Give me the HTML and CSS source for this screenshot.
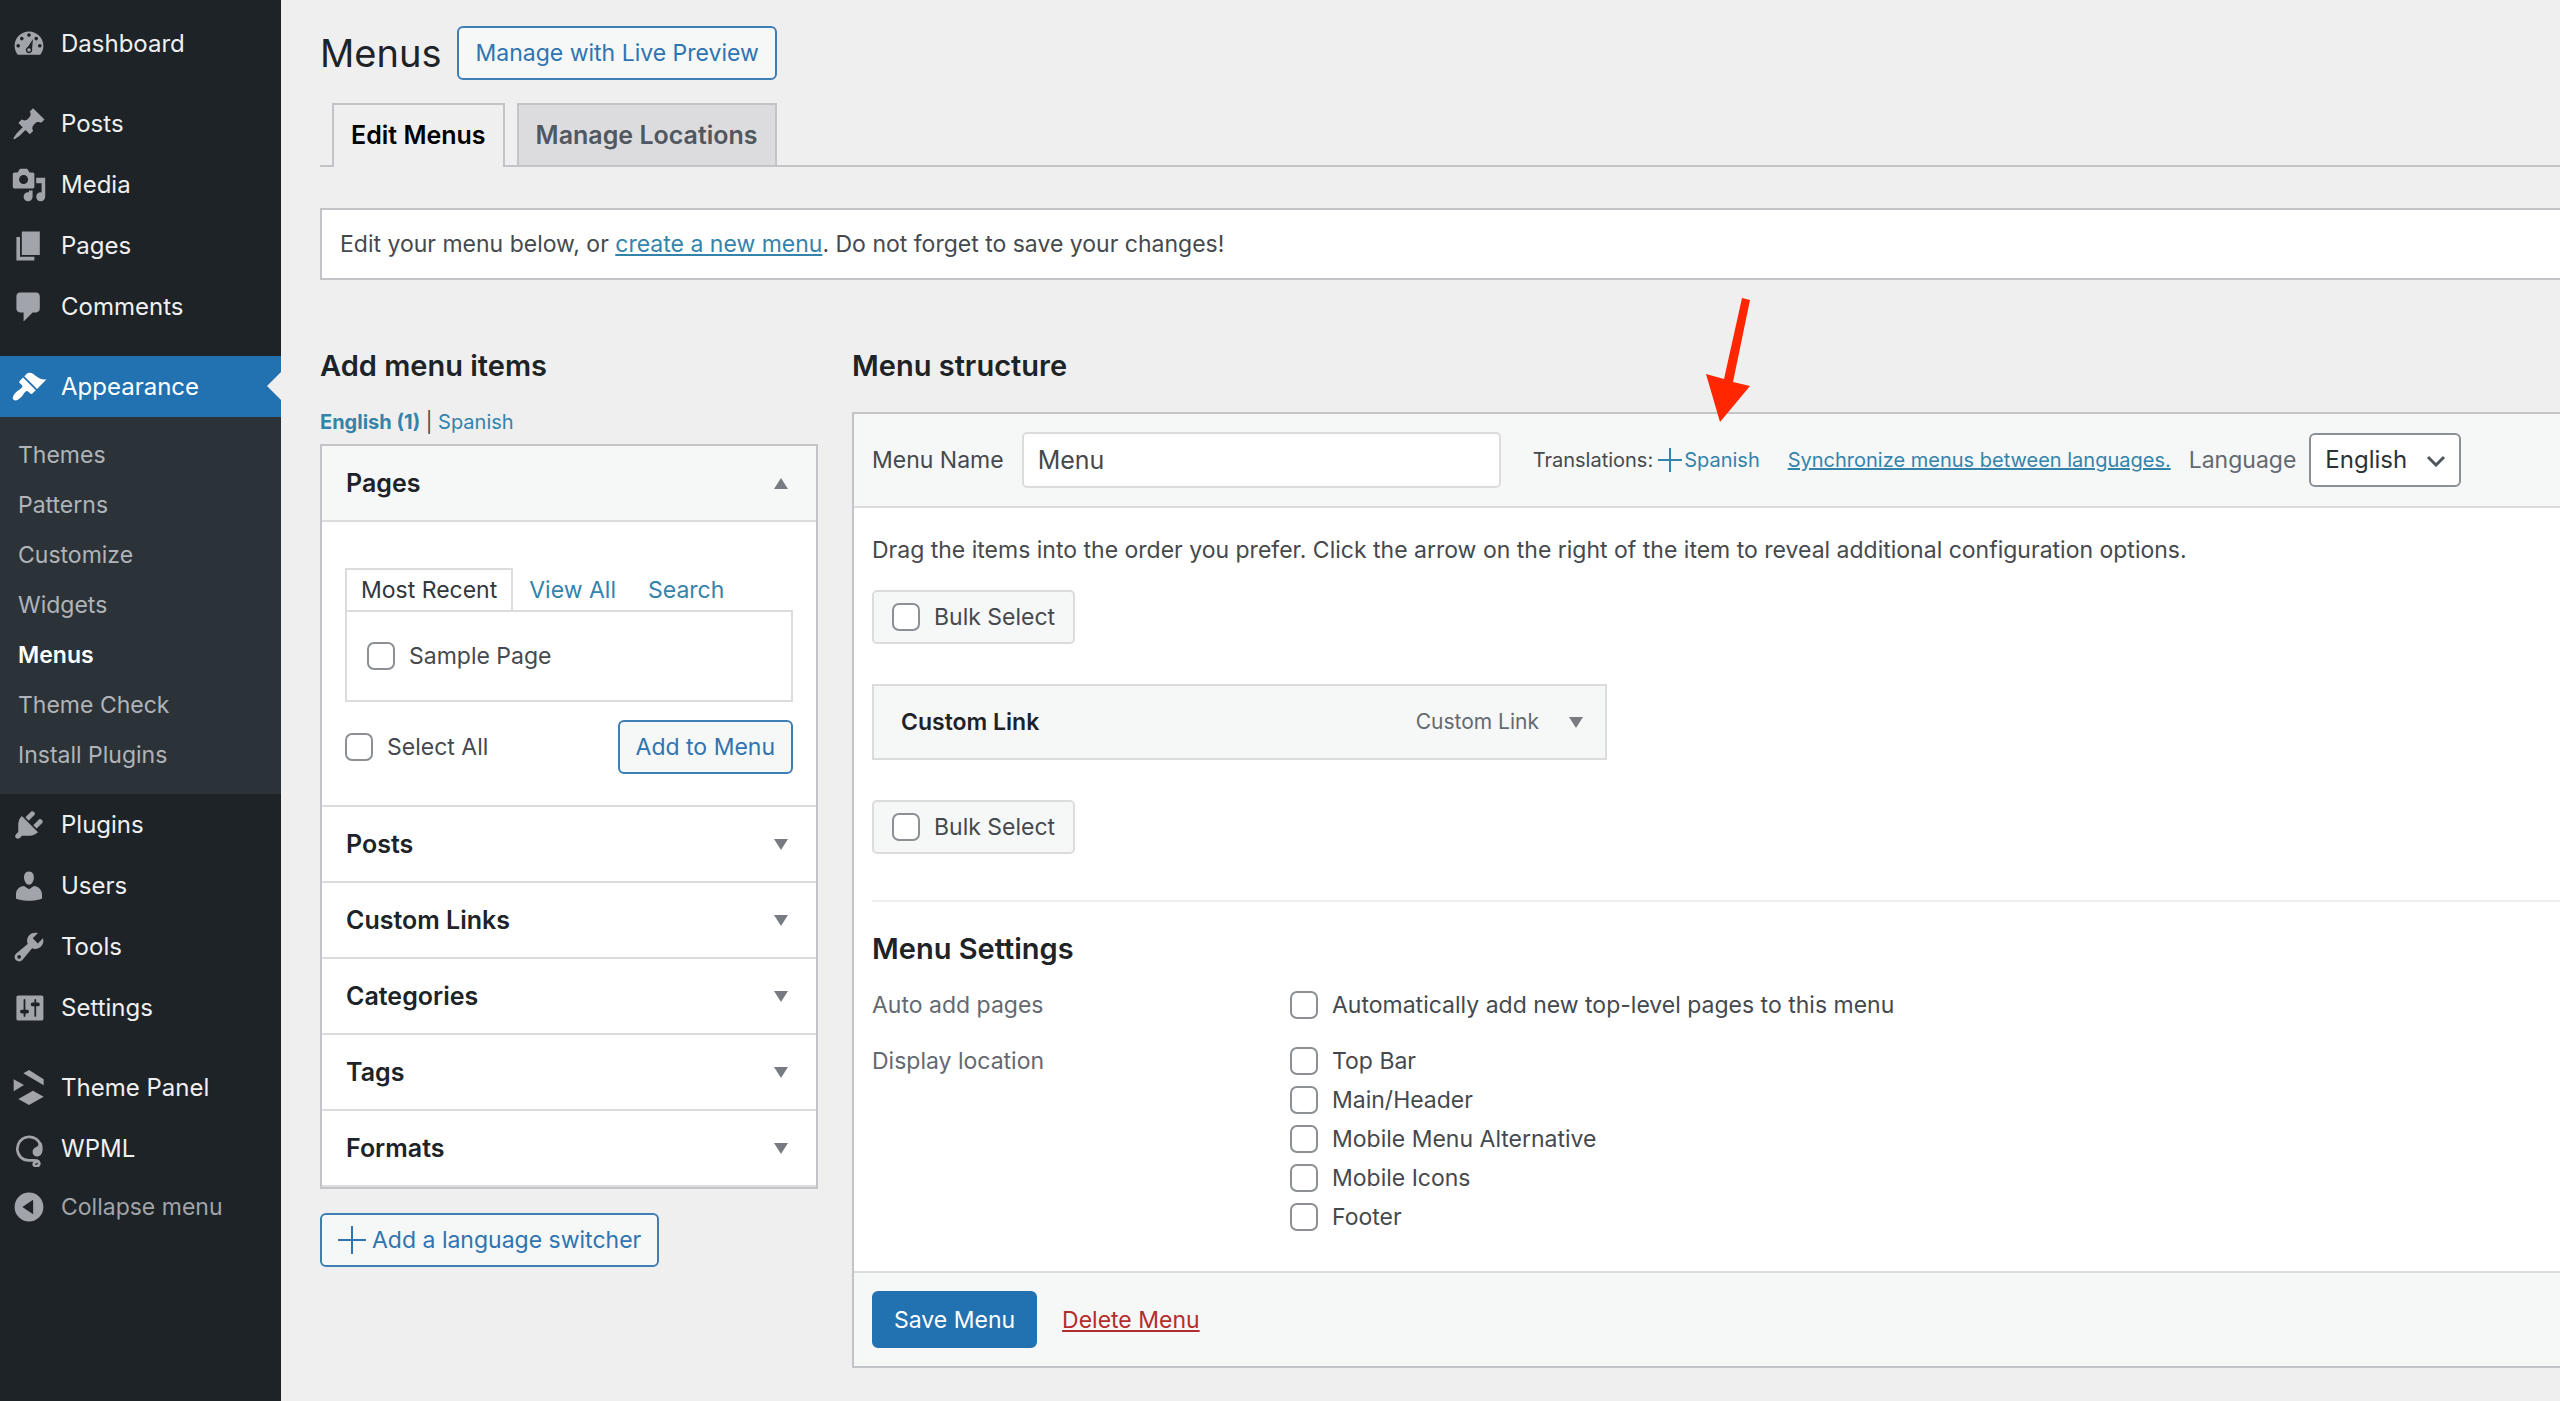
FILE: index.html
```html
<!DOCTYPE html>
<html lang="en">
<head>
<meta charset="utf-8">
<meta name="viewport" content="width=device-width, initial-scale=1">
<title>Menus</title>
<link rel="stylesheet" href="styles.css">
</head>
<body>
<div class="layout">
  <nav class="sidebar" aria-label="Main menu">
    <ul class="menu">
      <li><a class="menu-link" href="#"><svg class="icon" viewBox="0 0 20 20"><path fill-rule="evenodd" d="M3.76 16h12.48c1.1-1.37 1.76-3.11 1.76-5 0-4.42-3.58-8-8-8s-8 3.58-8 8c0 1.89.66 3.63 1.76 5zM10 4c.55 0 1 .45 1 1s-.45 1-1 1-1-.45-1-1 .45-1 1-1zM6 6c.55 0 1 .45 1 1s-.45 1-1 1-1-.45-1-1 .45-1 1-1zM14 6c.55 0 1 .45 1 1s-.45 1-1 1-1-.45-1-1 .45-1 1-1zM4 10c.55 0 1 .45 1 1s-.45 1-1 1-1-.45-1-1 .45-1 1-1zM16 10c.55 0 1 .45 1 1s-.45 1-1 1-1-.45-1-1 .45-1 1-1zM12.2 7.4 11.7 12.6c.1.3.1.5.1.7 0 1-.8 1.8-1.8 1.8s-1.8-.8-1.8-1.8c0-.8.5-1.4 1.1-1.7zM10 12.3a1 1 0 1 0 0 2 1 1 0 0 0 0-2z"/></svg>Dashboard</a></li>
      <li class="separator"></li>
      <li><a class="menu-link" href="#"><svg class="icon" viewBox="0 0 20 20"><path d="M10.44 3.02l1.82-1.82 6.36 6.35-1.83 1.82c-1.05-.68-2.48-.57-3.41.36l-.75.75c-.92.93-1.04 2.35-.35 3.41l-1.83 1.82-2.41-2.41-2.8 2.79c-.42.42-3.38 2.71-3.8 2.29s1.86-3.39 2.28-3.81l2.79-2.79L4.1 9.38l1.83-1.83c1.05.69 2.48.57 3.4-.36l.75-.75c.93-.92 1.05-2.35.36-3.42z"/></svg>Posts</a></li>
      <li><a class="menu-link" href="#"><svg class="icon" viewBox="0 0 20 20"><path fill-rule="evenodd" d="M13 11V4c0-.55-.45-1-1-1h-1.67L9 1H5L3.67 3H2c-.55 0-1 .45-1 1v7c0 .55.45 1 1 1h10c.55 0 1-.45 1-1zM7 4.5c1.38 0 2.5 1.12 2.5 2.5S8.38 9.5 7 9.5 4.5 8.38 4.5 7 5.62 4.5 7 4.5zM14 6h5v10.5c0 1.38-1.12 2.5-2.5 2.5S14 17.88 14 16.5s1.12-2.5 2.5-2.5c.17 0 .34.02.5.05V9h-3V6zM10 14.05V13h2v3.5c0 1.38-1.12 2.5-2.5 2.5S7 17.88 7 16.5 8.12 14 9.5 14c.17 0 .34.02.5.05z"/></svg>Media</a></li>
      <li><a class="menu-link" href="#"><svg class="icon" viewBox="0 0 20 20"><path d="M6 15V2h10v13H6zm-1 1h8v2H3V5h2v11z"/></svg>Pages</a></li>
      <li><a class="menu-link" href="#"><svg class="icon" viewBox="0 0 20 20"><path d="M5 2h9c1.1 0 2 .9 2 2v7c0 1.1-.9 2-2 2h-2l-5 5v-5H5c-1.1 0-2-.9-2-2V4c0-1.1.9-2 2-2z"/></svg>Comments</a></li>
      <li class="separator"></li>
      <li>
        <a class="menu-link current" href="#"><svg class="icon" viewBox="0 0 20 20"><path d="M14.48 11.06L7.41 3.99l1.5-1.5c.5-.56 2.3-.47 3.51.32 1.21.8 1.43 1.28 2.91 2.1 1.18.64 2.45 1.26 4.45.85zm-.71.71L6.7 4.7 4.93 6.47c-.39.39-.39 1.02 0 1.41l1.06 1.06c.39.39.39 1.03 0 1.42-.6.6-1.43 1.11-2.21 1.69-.35.26-.7.53-1.01.84C1.43 14.23.4 16.08 1.4 17.07c.99 1 2.84-.03 4.18-1.36.31-.31.58-.66.85-1.02.57-.78 1.08-1.61 1.69-2.21.39-.39 1.02-.39 1.41 0l1.06 1.06c.39.39 1.02.39 1.41 0z"/></svg>Appearance</a>
        <ul class="submenu">
          <li><a href="#">Themes</a></li>
          <li><a href="#">Patterns</a></li>
          <li><a href="#">Customize</a></li>
          <li><a href="#">Widgets</a></li>
          <li><a class="active" href="#">Menus</a></li>
          <li><a href="#">Theme Check</a></li>
          <li><a href="#">Install Plugins</a></li>
        </ul>
      </li>
      <li><a class="menu-link" href="#"><svg class="icon" viewBox="0 0 20 20"><path d="M13.11 4.36L9.87 7.6 8 5.73l3.24-3.24c.35-.34 1.05-.2 1.56.32.52.51.66 1.21.31 1.55zm-8 1.77l.91-1.12 9.01 9.01-1.19.84c-.71.71-2.63 1.16-3.82 1.16H6.14L4.9 17.26c-.59.59-1.54.59-2.12 0-.59-.58-.59-1.53 0-2.12l1.24-1.24v-3.88c0-1.13.4-3.19 1.09-3.89zm7.26 3.97l3.24-3.24c.34-.35 1.04-.21 1.55.31.52.51.66 1.21.31 1.55l-3.24 3.25z"/></svg>Plugins</a></li>
      <li><a class="menu-link" href="#"><svg class="icon" viewBox="0 0 20 20"><path d="M10 9.25c-2.27 0-2.73-3.44-2.73-3.44C7 4.02 7.82 2 9.97 2c2.16 0 2.98 2.02 2.71 3.81 0 0-.41 3.44-2.68 3.44zm0 2.57L12.72 10c2.39 0 4.52 2.33 4.52 4.53v2.49s-3.65 1.13-7.24 1.13c-3.65 0-7.24-1.13-7.24-1.13v-2.49c0-2.25 1.94-4.48 4.47-4.48z"/></svg>Users</a></li>
      <li><a class="menu-link" href="#"><svg class="icon" viewBox="0 0 20 20"><path fill-rule="evenodd" d="M16.68 9.77c-1.34 1.34-3.3 1.67-4.95.99l-5.41 6.52c-.99.99-2.59.99-3.58 0s-.99-2.59 0-3.57l6.52-5.42c-.68-1.65-.35-3.61.99-4.95 1.28-1.28 3.12-1.62 4.72-1.06l-2.89 2.89 2.82 2.82 2.86-2.87c.53 1.58.18 3.39-1.08 4.65zM3.81 16.21c.4.39 1.04.39 1.43 0 .4-.4.4-1.04 0-1.43-.39-.4-1.03-.4-1.43 0-.39.39-.39 1.03 0 1.43z"/></svg>Tools</a></li>
      <li><a class="menu-link" href="#"><svg class="icon" viewBox="0 0 20 20"><path fill-rule="evenodd" d="M18 16V4c0-.55-.45-1-1-1H4c-.55 0-1 .45-1 1v12c0 .55.45 1 1 1h13c.55 0 1-.45 1-1zM8 11h1c.55 0 1 .45 1 1s-.45 1-1 1H8v1.5c0 .28-.22.5-.5.5s-.5-.22-.5-.5V13H6c-.55 0-1-.45-1-1s.45-1 1-1h1V5.500c0-.28.22-.5.5-.5s.5.22.5.5zM14 9v5.500c0 .28-.22.5-.5.5s-.5-.22-.5-.5V9h-1c-.55 0-1-.45-1-1s.45-1 1-1h1V5.500c0-.28.22-.5.5-.5s.5.22.5.5V7h1c.55 0 1 .45 1 1s-.45 1-1 1z"/></svg>Settings</a></li>
      <li class="separator"></li>
      <li><a class="menu-link" href="#"><svg class="icon" viewBox="0 0 108 108"><path d="M37 10 54 0l44 28v18zM8 28l31 17L8 64zM22 87l44-25 32 18-44 25z"/></svg>Theme Panel</a></li>
      <li><a class="menu-link" href="#"><svg class="icon" viewBox="0 0 108 108"><path d="M92 36c6 18 3 35-9 40-9 2-19-4-18-14 0-7 4-10 9-13 7-4 10-6 8-13z"/><path class="stroke" d="M90 45C84 24 66 16 50 18 30 21 18 37 19 56c2 20 16 32 34 32 14 1 30-3 32 8 1 12-18 12-17 3 1-5 7-5 8-2"/></svg>WPML</a></li>
      <li><button class="menu-link collapse" type="button"><svg class="icon" viewBox="0 0 20 20"><path fill-rule="evenodd" d="M10 2a8 8 0 1 0 0 16 8 8 0 0 0 0-16zM12.300 6v8L6.300 10z"/></svg>Collapse menu</button></li>
    </ul>
  </nav>

  <main class="content">
    <header class="page-head">
      <h1>Menus</h1>
      <a class="button" href="#">Manage with Live Preview</a>
    </header>
    <nav class="tabs" aria-label="Sections">
      <a class="tab selected" href="#">Edit Menus</a>
      <a class="tab" href="#">Manage Locations</a>
    </nav>
    <p class="notice">Edit your menu below, or <a href="#">create a new menu</a>. Do not forget to save your changes!</p>

    <div class="columns">
      <section class="items-column">
        <h2>Add menu items</h2>
        <p class="languages"><a class="strong" href="#">English (1)</a> | <a href="#">Spanish</a></p>
        <div class="accordion">
          <h3><button class="accordion-head open" type="button">Pages<svg class="arrow" viewBox="0 0 14 11"><path d="M7 0l7 11H0z"/></svg></button></h3>
          <div class="accordion-body">
            <div class="subtabs">
              <a class="subtab selected" href="#">Most Recent</a>
              <a class="subtab" href="#">View All</a>
              <a class="subtab" href="#">Search</a>
            </div>
            <div class="page-list">
              <label class="check"><input type="checkbox">Sample Page</label>
            </div>
            <div class="page-actions">
              <label class="check"><input type="checkbox">Select All</label>
              <button class="button" type="button">Add to Menu</button>
            </div>
          </div>
          <h3><button class="accordion-head" type="button">Posts<svg class="arrow" viewBox="0 0 14 11"><path d="M0 0h14L7 11z"/></svg></button></h3>
          <h3><button class="accordion-head" type="button">Custom Links<svg class="arrow" viewBox="0 0 14 11"><path d="M0 0h14L7 11z"/></svg></button></h3>
          <h3><button class="accordion-head" type="button">Categories<svg class="arrow" viewBox="0 0 14 11"><path d="M0 0h14L7 11z"/></svg></button></h3>
          <h3><button class="accordion-head" type="button">Tags<svg class="arrow" viewBox="0 0 14 11"><path d="M0 0h14L7 11z"/></svg></button></h3>
          <h3><button class="accordion-head" type="button">Formats<svg class="arrow" viewBox="0 0 14 11"><path d="M0 0h14L7 11z"/></svg></button></h3>
        </div>
        <button class="button switcher" type="button"><svg class="plus" viewBox="0 0 28 28"><path d="M14 0v28M0 14h28"/></svg>Add a language switcher</button>
      </section>

      <section class="structure-column">
        <h2>Menu structure</h2>
        <div class="editor">
          <div class="editor-head">
            <label class="name-label" for="menu-name">Menu Name</label>
            <input class="name-input" id="menu-name" type="text" value="Menu">
            <span class="translations">Translations: <a href="#"><svg class="plus small" viewBox="0 0 24 24"><path d="M12 0v24M0 12h24"/></svg>Spanish</a></span>
            <a class="sync" href="#">Synchronize menus between languages.</a>
            <label class="language-label" for="language">Language</label>
            <span class="select-wrap">
              <select id="language"><option>English</option></select>
              <svg class="chevron" viewBox="0 0 20 12"><path d="M2 2l8 8 8-8"/></svg>
            </span>
            <svg class="pointer" viewBox="0 0 44 124" aria-hidden="true"><path d="M36 0l8 2-17 82 17 4L14 124 0 76l18 5z"/></svg>
          </div>
          <div class="editor-body">
            <p>Drag the items into the order you prefer. Click the arrow on the right of the item to reveal additional configuration options.</p>
            <label class="check bulk"><input type="checkbox">Bulk Select</label>
            <div class="menu-item">
              <strong>Custom Link</strong>
              <span class="item-type">Custom Link</span>
              <button class="item-toggle" type="button" aria-label="Edit Custom Link"><svg class="arrow" viewBox="0 0 14 11"><path d="M0 0h14L7 11z"/></svg></button>
            </div>
            <label class="check bulk"><input type="checkbox">Bulk Select</label>
            <div class="settings">
              <h2>Menu Settings</h2>
              <fieldset>
                <legend>Auto add pages</legend>
                <div class="options">
                  <label class="check"><input type="checkbox">Automatically add new top-level pages to this menu</label>
                </div>
              </fieldset>
              <fieldset>
                <legend>Display location</legend>
                <div class="options">
                  <label class="check"><input type="checkbox">Top Bar</label>
                  <label class="check"><input type="checkbox">Main/Header</label>
                  <label class="check"><input type="checkbox">Mobile Menu Alternative</label>
                  <label class="check"><input type="checkbox">Mobile Icons</label>
                  <label class="check"><input type="checkbox">Footer</label>
                </div>
              </fieldset>
            </div>
          </div>
          <footer class="editor-foot">
            <button class="button primary" type="button">Save Menu</button>
            <a class="delete" href="#">Delete Menu</a>
          </footer>
        </div>
      </section>
    </div>
  </main>
</div>
</body>
</html>
```
FILE: styles.css
```css
* {
  box-sizing: border-box;
}

body {
  margin: 0;
  background: #efefef;
  color: #45494d;
  font-family: Inter, "Liberation Sans", sans-serif;
  font-size: 23px;
  line-height: 32px;
  overflow-x: hidden;
}

h1, h2, h3, p, ul, fieldset {
  margin: 0;
  padding: 0;
}

ul {
  list-style: none;
}

a {
  color: #3483ab;
}

button, input, select {
  font: inherit;
  color: inherit;
}

.layout {
  display: flex;
  min-height: 100vh;
}

/* Sidebar */

.sidebar {
  flex: none;
  width: 281px;
  padding-top: 13px;
  background: #1d2327;
}

.separator {
  height: 19px;
}

.menu-link {
  display: flex;
  align-items: center;
  gap: 14px;
  width: 100%;
  height: 61px;
  padding: 0 0 0 11px;
  border: 0;
  background: none;
  color: #f0f0f1;
  font-size: 24px;
  text-decoration: none;
}

.menu-link.current {
  position: relative;
  background: #2271b1;
  color: #fff;
}

.menu-link.current::after {
  content: "";
  position: absolute;
  right: 0;
  top: 16px;
  border: 14px solid transparent;
  border-left: 0;
  border-right-color: #efefef;
}

.menu-link.collapse {
  height: 56px;
  color: #a1a5aa;
  font-size: 23px;
}

.icon {
  flex: none;
  width: 36px;
  height: 36px;
  fill: #a1a5ab;
}

.icon .stroke {
  fill: none;
  stroke: #a1a5ab;
  stroke-width: 8;
}

.current .icon {
  fill: #fff;
}

.submenu {
  padding: 13px 0 14px;
  background: #2c3338;
}

.submenu a {
  display: block;
  height: 50px;
  padding-left: 18px;
  color: #b0b4b9;
  line-height: 50px;
  text-decoration: none;
}

.submenu .active {
  color: #fff;
  font-weight: 600;
}

/* Page heading */

.content {
  flex: 1;
  min-width: 0;
  padding: 26px 0 32px 39px;
}

.page-head {
  display: flex;
  align-items: center;
  gap: 16px;
}

h1 {
  color: #1d2327;
  font-size: 38px;
  font-weight: 400;
  line-height: 54px;
}

.button {
  display: inline-flex;
  align-items: center;
  justify-content: center;
  height: 54px;
  padding: 0 16px;
  border: 2px solid #3d7fb5;
  border-radius: 6px;
  background: #f6f7f7;
  color: #2f74b0;
  text-decoration: none;
  white-space: nowrap;
}

.tabs {
  display: flex;
  gap: 12px;
  margin-top: 23px;
  padding-left: 12px;
  border-bottom: 2px solid #c3c4c7;
}

.tab {
  height: 62px;
  padding: 0 17px;
  border: 2px solid #c3c4c7;
  border-bottom: 0;
  background: #dcdcde;
  color: #50575e;
  font-size: 25px;
  font-weight: 600;
  line-height: 60px;
  text-decoration: none;
}

.tab.selected {
  height: 64px;
  margin-bottom: -2px;
  background: #efefef;
  color: #000;
}

.notice {
  margin-top: 41px;
  padding: 18px;
  border: 2px solid #c3c4c7;
  border-right: 0;
  background: #fff;
}

/* Columns */

.columns {
  display: flex;
  gap: 34px;
  margin-top: 66px;
}

.items-column {
  flex: none;
  width: 498px;
}

.structure-column {
  flex: 1;
  min-width: 0;
}

h2 {
  color: #1d2327;
  font-size: 29px;
  font-weight: 600;
  line-height: 40px;
}

.languages {
  margin: 22px 0 8px;
  font-size: 20px;
  line-height: 28px;
}

.languages a {
  text-decoration: none;
}

.languages .strong {
  font-weight: 700;
}

.accordion {
  border: 2px solid #c3c4c7;
  background: #fff;
}

.accordion-head {
  display: flex;
  align-items: center;
  justify-content: space-between;
  width: 100%;
  height: 76px;
  padding: 0 28px 0 24px;
  border: 0;
  border-bottom: 2px solid #dcdcde;
  background: #fff;
  color: #1d2327;
  font-size: 25px;
  font-weight: 600;
}

.accordion-head.open {
  background: #f6f7f7;
}

.arrow {
  flex: none;
  width: 14px;
  height: 11px;
  fill: #787c82;
}

.accordion-body {
  padding: 46px 23px 31px;
  border-bottom: 2px solid #dcdcde;
}

.subtabs {
  display: flex;
}

.subtab {
  height: 42px;
  padding: 0 14px;
  border: 2px solid transparent;
  border-bottom: 0;
  line-height: 40px;
  text-decoration: none;
}

.subtab.selected {
  border-color: #dcdcde;
  color: #32373c;
}

.page-list {
  padding: 28px 20px;
  border: 2px solid #dcdcde;
}

.page-actions {
  display: flex;
  align-items: center;
  justify-content: space-between;
  margin-top: 18px;
}

.check {
  display: flex;
  align-items: center;
  gap: 14px;
}

.check input {
  appearance: none;
  flex: none;
  width: 28px;
  height: 28px;
  margin: 0;
  border: 2px solid #8c8f94;
  border-radius: 7px;
  background: #fff;
}

.switcher {
  gap: 6px;
  margin-top: 24px;
}

.plus {
  width: 28px;
  height: 28px;
  fill: none;
  stroke: currentColor;
  stroke-width: 2;
}

.plus.small {
  width: 24px;
  height: 24px;
}

/* Menu editor */

.editor {
  margin-top: 26px;
  border: 2px solid #c3c4c7;
  border-right: 0;
  background: #fff;
}

.editor-head {
  position: relative;
  display: flex;
  align-items: center;
  padding: 18px;
  border-bottom: 2px solid #dcdcde;
  background: #f6f7f7;
}

.name-input {
  width: 479px;
  height: 56px;
  margin: 0 32px 0 18px;
  padding: 0 14px;
  border: 2px solid #dcdcde;
  border-radius: 5px;
  background: #fff;
  font-size: 25px;
}

.translations, .sync {
  font-size: 20px;
  white-space: nowrap;
}

.translations {
  display: flex;
  gap: 5px;
  margin-right: 28px;
}

.translations a {
  display: flex;
  align-items: center;
  gap: 2px;
  text-decoration: none;
}

.language-label {
  margin: 0 13px 0 18px;
  color: #646970;
}

.select-wrap {
  position: relative;
}

select {
  appearance: none;
  display: block;
  width: 152px;
  height: 54px;
  padding: 0 14px;
  border: 2px solid #8c8f94;
  border-radius: 6px;
  background: #fff;
  color: #2c3338;
  font-size: 24px;
}

.chevron {
  position: absolute;
  right: 15px;
  top: 22px;
  width: 20px;
  height: 12px;
  fill: none;
  stroke: #50575e;
  stroke-width: 3;
  pointer-events: none;
}

/* Annotation arrow laid over the editor header */
.pointer {
  position: absolute;
  left: 852px;
  top: -116px;
  width: 44px;
  height: 124px;
  fill: #ff2600;
}

.editor-body {
  padding: 26px 0 38px 18px;
}

.bulk {
  width: fit-content;
  height: 54px;
  padding: 0 18px;
  border: 2px solid #dcdcde;
  border-radius: 5px;
  background: #f6f7f7;
}

.editor-body > p {
  margin-bottom: 24px;
}

.menu-item {
  display: flex;
  align-items: center;
  width: 735px;
  height: 76px;
  margin: 40px 0;
  padding: 0 22px 0 27px;
  border: 2px solid #dcdcde;
  background: #f6f7f7;
}

.menu-item strong {
  flex: 1;
  color: #1d2327;
  font-weight: 600;
}

.item-type {
  color: #646970;
  font-size: 21px;
}

.item-toggle {
  display: flex;
  margin-left: 30px;
  padding: 0;
  border: 0;
  background: none;
}

.settings {
  display: grid;
  gap: 24px;
  margin-top: 46px;
  padding-top: 27px;
  border-top: 2px solid #f0f0f1;
}

.settings h2 {
  margin-bottom: -4px;
}

fieldset {
  display: flex;
  min-width: 0;
  border: 0;
}

legend {
  float: left;
  width: 418px;
  padding: 0;
  color: #646970;
}

.options {
  display: grid;
  gap: 7px;
}

.editor-foot {
  display: flex;
  align-items: center;
  gap: 25px;
  padding: 18px;
  border-top: 2px solid #dcdcde;
  background: #f6f7f7;
}

.button.primary {
  height: 57px;
  padding: 0 20px;
  border-color: #2271b1;
  background: #2271b1;
  color: #fff;
}

.delete {
  color: #b32d2e;
}
```
